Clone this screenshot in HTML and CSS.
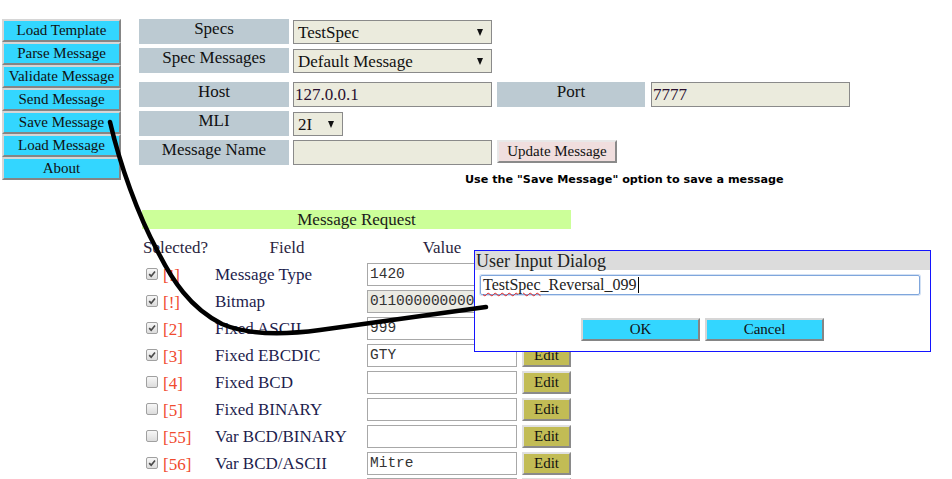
FILE: index.html
```html
<!DOCTYPE html>
<html>
<head>
<meta charset="utf-8">
<title>Message Tool</title>
<link rel="stylesheet" href="styles.css">
</head>
<body>
<div class="page">
  <nav class="side">
    <button class="nbtn">Load Template</button>
    <button class="nbtn">Parse Message</button>
    <button class="nbtn">Validate Message</button>
    <button class="nbtn">Send Message</button>
    <button class="nbtn">Save Message</button>
    <button class="nbtn">Load Message</button>
    <button class="nbtn">About</button>
  </nav>
  <main class="main">
    <div class="form">
      <div class="frow">
        <div class="lbl">Specs</div>
        <div class="fld sel"><span>TestSpec</span><i class="tri"></i></div>
      </div>
      <div class="frow">
        <div class="lbl">Spec Messages</div>
        <div class="fld sel"><span>Default Message</span><i class="tri"></i></div>
      </div>
      <div class="frow host">
        <div class="lbl">Host</div>
        <div class="fld txt">127.0.0.1</div>
        <div class="lbl port">Port</div>
        <div class="fld txt portin">7777</div>
      </div>
      <div class="frow">
        <div class="lbl">MLI</div>
        <div class="fld sel mli"><span>2I</span><i class="tri"></i></div>
      </div>
      <div class="frow">
        <div class="lbl">Message Name</div>
        <div class="fld txt"></div>
        <button class="upd">Update Message</button>
      </div>
    </div>
    <p class="hint">Use the "Save Message" option to save a message</p>
    <section class="req">
      <div class="req-title">Message Request</div>
      <div class="thead">
        <span class="h1">Selected?</span>
        <span class="h2">Field</span>
        <span class="h3">Value</span>
      </div>
      <div class="trow">
        <div class="sel-c"><span class="cb on"><svg viewBox="0 0 12 12"><path d="M2.6 6.2 L5 8.6 L9.6 3" /></svg></span><span class="num">[!]</span></div>
        <div class="fname">Message Type</div>
        <div class="val">1420</div>
        <button class="edit" aria-label="Edit"></button>
      </div>
      <div class="trow">
        <div class="sel-c"><span class="cb on"><svg viewBox="0 0 12 12"><path d="M2.6 6.2 L5 8.6 L9.6 3" /></svg></span><span class="num">[!]</span></div>
        <div class="fname">Bitmap</div>
        <div class="val ro">0110000000000000</div>
        <button class="edit" aria-label="Edit"></button>
      </div>
      <div class="trow">
        <div class="sel-c"><span class="cb on"><svg viewBox="0 0 12 12"><path d="M2.6 6.2 L5 8.6 L9.6 3" /></svg></span><span class="num">[2]</span></div>
        <div class="fname">Fixed ASCII</div>
        <div class="val">999</div>
        <button class="edit" aria-label="Edit"></button>
      </div>
      <div class="trow">
        <div class="sel-c"><span class="cb on"><svg viewBox="0 0 12 12"><path d="M2.6 6.2 L5 8.6 L9.6 3" /></svg></span><span class="num">[3]</span></div>
        <div class="fname">Fixed EBCDIC</div>
        <div class="val">GTY</div>
        <button class="edit">Edit</button>
      </div>
      <div class="trow">
        <div class="sel-c"><span class="cb"></span><span class="num">[4]</span></div>
        <div class="fname">Fixed BCD</div>
        <div class="val"></div>
        <button class="edit">Edit</button>
      </div>
      <div class="trow">
        <div class="sel-c"><span class="cb"></span><span class="num">[5]</span></div>
        <div class="fname">Fixed BINARY</div>
        <div class="val"></div>
        <button class="edit">Edit</button>
      </div>
      <div class="trow">
        <div class="sel-c"><span class="cb"></span><span class="num">[55]</span></div>
        <div class="fname">Var BCD/BINARY</div>
        <div class="val"></div>
        <button class="edit">Edit</button>
      </div>
      <div class="trow">
        <div class="sel-c"><span class="cb on"><svg viewBox="0 0 12 12"><path d="M2.6 6.2 L5 8.6 L9.6 3" /></svg></span><span class="num">[56]</span></div>
        <div class="fname">Var BCD/ASCII</div>
        <div class="val">Mitre</div>
        <button class="edit">Edit</button>
      </div>
      <div class="trow">
        <div class="sel-c"></div>
        <div class="fname"></div>
        <div class="val"></div>
        <button class="edit"></button>
      </div>
    </section>
  </main>

  <div class="dialog">
    <div class="dlg-title">User Input Dialog</div>
    <div class="dlg-input"><span class="sp">TestSpec</span>_Reversal_099<i class="caret"></i></div>
    <div class="dlg-btns">
      <button class="dbtn">OK</button>
      <button class="dbtn">Cancel</button>
    </div>
  </div>

  <svg class="arrow" width="952" height="479" viewBox="0 0 952 479">
    <path d="M110 122 C120 165 138 215 157 250 C172 280 190 308 222 324 C250 336 290 334 320 330 L486 307" />
  </svg>
</div>
</body>
</html>
```

FILE: styles.css
```css
html, body {
  margin: 0;
  padding: 0;
  background: #fff;
}
body {
  font-family: "Liberation Serif", "Times New Roman", serif;
  color: #000;
}
.page {
  position: relative;
  display: flex;
  align-items: flex-start;
  width: 952px;
  height: 479px;
  padding-top: 19px;
  box-sizing: border-box;
  overflow: hidden;
}

/* sidebar */
.side {
  margin-left: 2px;
  width: 119px;
  display: flex;
  flex-direction: column;
}
.nbtn {
  height: 23px;
  width: 119px;
  box-sizing: border-box;
  border: 2px solid;
  border-color: #d6d6d6 #858585 #858585 #d6d6d6;
  background: #33d6ff;
  font: 15px "Liberation Serif", serif;
  color: #111;
  padding: 0;
  line-height: 17px;
}

/* main */
.main {
  margin-left: 18px;
  display: flex;
  flex-direction: column;
}
.form {
  display: flex;
  flex-direction: column;
  gap: 4px;
}
.frow {
  display: flex;
  height: 25px;
}
.frow.host {
  margin-top: 5px;
}
.lbl {
  width: 150px;
  height: 25px;
  background: #bccad2;
  text-align: center;
  font-size: 17px;
  line-height: 20px;
  color: #111;
}
.lbl.port {
  margin-left: 5px;
  width: 148px;
}
.fld {
  margin-left: 4px;
  width: 199px;
  height: 25px;
  box-sizing: border-box;
  border: 1px solid #8a8a8a;
  background: #ebebdd;
  font-size: 17px;
  color: #111;
}
.fld.sel {
  height: 24px;
  margin-top: 1px;
  display: flex;
  align-items: center;
  justify-content: space-between;
  padding: 1px 8px 0 4px;
}
.fld.mli {
  width: 50px;
}
.tri {
  width: 0;
  height: 0;
  border-left: 3.5px solid transparent;
  border-right: 3.5px solid transparent;
  border-top: 7px solid #111;
}
.fld.txt {
  padding: 1px 0 0 1px;
  line-height: 21px;
  color: #2a1030;
}
.fld.portin {
  margin-left: 6px;
}
.upd {
  margin-left: 5px;
  width: 120px;
  height: 23px;
  box-sizing: border-box;
  border: 2px solid;
  border-color: #e8e8e8 #8a8a8a #8a8a8a #e8e8e8;
  background: #f0dede;
  font: 15px "Liberation Serif", serif;
  color: #111;
  padding: 0;
}

.hint {
  margin: 8px 0 0 326px;
  height: 18px;
  line-height: 18px;
  font: bold 11.2px "DejaVu Sans", sans-serif;
  color: #000;
  white-space: nowrap;
}

/* message request */
.req {
  margin: 19px 0 0 3px;
  width: 429px;
}
.req-title {
  height: 19px;
  background: #ccff99;
  text-align: center;
  font-size: 17px;
  line-height: 19px;
  color: #1a1a1a;
}
.thead {
  display: grid;
  grid-template-columns: 73px 152px 150px;
  height: 33px;
  padding-top: 10px;
  box-sizing: border-box;
  font-size: 17px;
  line-height: 17px;
  color: #2b1f3f;
}
.h1 { padding-left: 1px; }
.h2, .h3 { text-align: center; }
.h2 { padding-right: 8px; }

.trow {
  display: grid;
  grid-template-columns: 73px 152px 150px 54px;
  height: 23px;
  margin-bottom: 4px;
  align-items: center;
}
.sel-c {
  display: flex;
  align-items: center;
  padding-left: 4px;
}
.cb {
  width: 12px;
  height: 12px;
  box-sizing: border-box;
  border: 1px solid #a0a0a0;
  border-radius: 2px;
  background: linear-gradient(#f7f7f7, #dcdcdc);
  display: flex;
}
.cb svg {
  width: 10px;
  height: 10px;
}
.cb svg path {
  fill: none;
  stroke: #4a4a4a;
  stroke-width: 2;
}
.num {
  margin-left: 5px;
  margin-top: 4px;
  font-size: 17px;
  color: #f04a2e;
}
.fname {
  font-size: 17px;
  color: #1d1d4d;
  padding-top: 1px;
}
.val {
  width: 150px;
  height: 23px;
  box-sizing: border-box;
  border: 1px solid #a8a8a8;
  background: #fff;
  font: 14.5px "Liberation Mono", monospace;
  line-height: 21px;
  padding-left: 2px;
  color: #333;
  overflow: hidden;
  white-space: nowrap;
}
.val.ro {
  background: #ebebe4;
}
.edit {
  margin-left: 5px;
  width: 49px;
  height: 23px;
  box-sizing: border-box;
  border: 2px solid;
  border-color: #e0e0e0 #8a8a8a #8a8a8a #e0e0e0;
  background: #c2bc55;
  font: 15px "Liberation Serif", serif;
  color: #111;
  padding: 0;
}

/* dialog */
.dialog {
  position: absolute;
  left: 474px;
  top: 250px;
  width: 457px;
  height: 102px;
  box-sizing: border-box;
  border: 1px solid #1414ff;
  background: #fff;
}
.dlg-title {
  height: 19px;
  background: #dcdcdc;
  font-size: 18px;
  line-height: 20px;
  padding-left: 1px;
  color: #222;
}
.dlg-input {
  margin: 5px 0 0 5px;
  width: 440px;
  height: 20px;
  box-sizing: border-box;
  border: 1px solid #7fa6dc;
  border-radius: 2px;
  box-shadow: 0 0 0 1px #d3e1f4;
  font-size: 16px;
  line-height: 18px;
  padding-left: 2px;
  color: #222;
  display: flex;
  align-items: center;
}
.sp {
  text-decoration: underline wavy #e02020;
  text-decoration-thickness: 1px;
  text-underline-offset: 2px;
}
.caret {
  width: 1px;
  height: 16px;
  background: #000;
  margin-left: 1px;
}
.dlg-btns {
  display: flex;
  justify-content: center;
  gap: 5px;
  margin-top: 23px;
}
.dbtn {
  width: 119px;
  height: 23px;
  box-sizing: border-box;
  border: 2px solid;
  border-color: #d6d6d6 #858585 #858585 #d6d6d6;
  background: #33d6ff;
  font: 15px "Liberation Serif", serif;
  color: #111;
  padding: 0;
}

.arrow {
  position: absolute;
  left: 0;
  top: 0;
  pointer-events: none;
}
.arrow path {
  fill: none;
  stroke: #000;
  stroke-width: 4.5;
  stroke-linecap: round;
  stroke-linejoin: round;
}
```
